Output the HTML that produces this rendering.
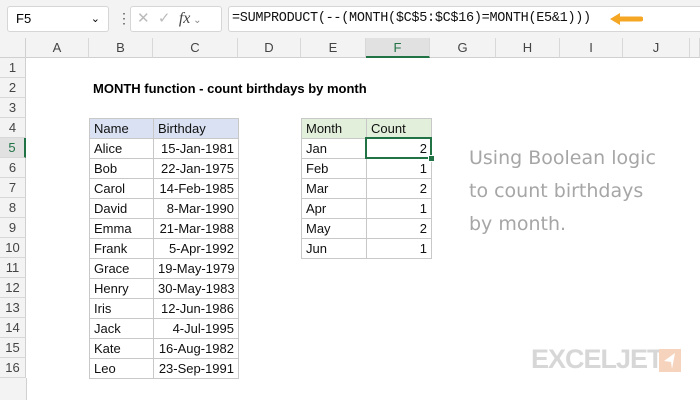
<!DOCTYPE html><html><head><style>
body{margin:0;width:700px;height:400px;overflow:hidden;background:#fff;font-family:"Liberation Sans",sans-serif;position:relative}
.a{position:absolute}
.top{left:0;top:0;width:700px;height:38px;background:#f3f3f3}
.box{background:#fff;border:1px solid #d6d6d6;border-radius:3px;box-sizing:border-box}
.ch{top:38px;height:20px;background:#f3f3f3;border-right:1px solid #d8d8d8;border-bottom:1px solid #d0d0d0;box-sizing:border-box;font-size:13px;color:#444;text-align:center;line-height:20px}
.rh{left:0;width:26px;height:20px;background:#f3f3f3;border-bottom:1px solid #d8d8d8;border-right:1px solid #d0d0d0;box-sizing:border-box;font-size:13px;color:#444;text-align:center;line-height:20px}
table{border-collapse:collapse;position:absolute;font-size:13px;color:#111;table-layout:fixed}
td{border:1px solid #c8c8c8;height:19px;padding:0 4px;line-height:19px;white-space:nowrap;box-sizing:border-box;overflow:hidden}
.r{text-align:right}
</style></head><body>
<div class="a top"></div>
<div class="a box" style="left:7px;top:6px;width:102px;height:26px;font-size:13px;line-height:24px;padding-left:8px">F5<span style="position:absolute;right:8px;top:0;font-size:11px">&#8964;</span></div>
<div class="a" style="left:117px;top:10px;font-size:14px;color:#555">&#8942;</div>
<div class="a box" style="left:130px;top:6px;width:92px;height:26px;color:#bbb;font-size:15px;line-height:24px;padding-left:6px">✕&nbsp;&nbsp;✓&nbsp;&nbsp;<i style="font-family:'Liberation Serif',serif;color:#444;font-size:16px">fx</i><span style="font-size:10px;color:#888"> &#8964;</span></div>
<div class="a box" style="left:228px;top:6px;width:480px;height:26px;font-family:'Liberation Mono',monospace;font-size:13.5px;line-height:24px;padding-left:3px;color:#111;letter-spacing:-0.3px">=SUMPRODUCT(--(MONTH($C$5:$C$16)=MONTH(E5&amp;1)))</div>
<svg class="a" style="left:609px;top:12px" width="34" height="14"><path d="M8 7H32" stroke="#f5a623" stroke-width="5" stroke-linecap="round"/><path d="M1 7L11 1V13Z" fill="#f5a623"/></svg>
<div class="a" style="left:0;top:38px;width:26px;height:20px;background:#f3f3f3;border-right:1px solid #d0d0d0;border-bottom:1px solid #d0d0d0;box-sizing:border-box"></div>
<div class="a ch" style="left:26px;width:63px">A</div>
<div class="a ch" style="left:89px;width:64px">B</div>
<div class="a ch" style="left:153px;width:85px">C</div>
<div class="a ch" style="left:238px;width:63px">D</div>
<div class="a ch" style="left:301px;width:65px">E</div>
<div class="a ch" style="left:366px;width:64px;background:#e1e1e1;border-bottom:2px solid #217346;color:#217346">F</div>
<div class="a ch" style="left:430px;width:66px">G</div>
<div class="a ch" style="left:496px;width:64px">H</div>
<div class="a ch" style="left:560px;width:63px">I</div>
<div class="a ch" style="left:623px;width:67px">J</div>
<div class="a ch" style="left:690px;width:10px"></div>
<div id="rows"></div>
<div class="a" style="left:93px;top:81px;font-size:13px;font-weight:bold">MONTH function - count birthdays by month</div>
<table style="left:89px;top:118px;width:149px"><colgroup><col style="width:64px"><col style="width:85px"></colgroup><tbody id="t1"></tbody></table>
<table style="left:301px;top:118px;width:130px"><colgroup><col style="width:65px"><col style="width:65px"></colgroup><tbody id="t2"></tbody></table>
<script>
var h='';for(var i=1;i<=16;i++){var t=38+i*20;h+='<div class="a rh" style="top:'+t+'px'+(i==5?';background:#e1e1e1;color:#217346;border-right:2px solid #217346':'')+'">'+i+'</div>';}
h+='<div class="a" style="left:0;top:378px;width:26px;height:22px;background:#f3f3f3;border-right:1px solid #d0d0d0"></div>';
document.getElementById('rows').innerHTML=h;
var d=[["Alice","15-Jan-1981"],["Bob","22-Jan-1975"],["Carol","14-Feb-1985"],["David","8-Mar-1990"],["Emma","21-Mar-1988"],["Frank","5-Apr-1992"],["Grace","19-May-1979"],["Henry","30-May-1983"],["Iris","12-Jun-1986"],["Jack","4-Jul-1995"],["Kate","16-Aug-1982"],["Leo","23-Sep-1991"]];
var s='<tr style="background:#d9e1f2"><td>Name</td><td>Birthday</td></tr>';
d.forEach(function(r){s+='<tr><td>'+r[0]+'</td><td class="r">'+r[1]+'</td></tr>';});
document.getElementById('t1').innerHTML=s;
var m=[["Jan",2],["Feb",1],["Mar",2],["Apr",1],["May",2],["Jun",1]];
s='<tr style="background:#e2efda"><td>Month</td><td>Count</td></tr>';
m.forEach(function(r){s+='<tr><td>'+r[0]+'</td><td class="r">'+r[1]+'</td></tr>';});
document.getElementById('t2').innerHTML=s;
</script>
<div class="a" style="left:365px;top:137px;width:67px;height:22px;border:2px solid #217346;box-sizing:border-box"></div>
<div class="a" style="left:428px;top:155px;width:5px;height:5px;background:#217346;border:1px solid #fff"></div>
<div class="a" style="left:469px;top:142px;font-family:'Comic Sans MS','DejaVu Sans',sans-serif;font-size:19px;line-height:33px;color:#a6a6a6">Using Boolean logic<br>to count birthdays<br>by month.</div>
<div class="a" style="left:531px;top:344px;font-size:27px;font-weight:bold;color:#d7d7d7;letter-spacing:-1px">EXCELJET</div>
<div class="a" style="left:659px;top:349px;width:22px;height:23px;background:#f6d3bc"><svg width="22" height="23"><path d="M16 4L5 12L12 13L13 20Z" fill="#fff"/></svg></div>
</body></html>
